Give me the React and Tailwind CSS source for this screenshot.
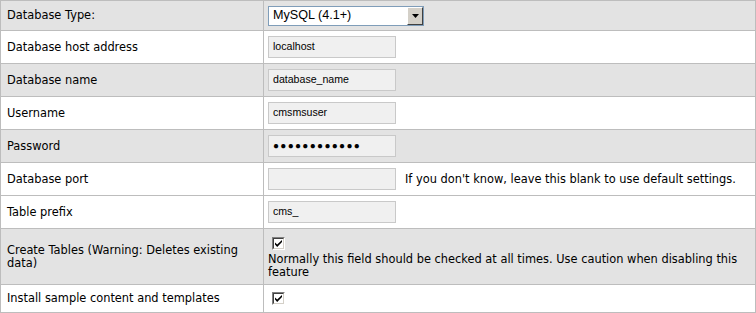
import React from "react";

const label = "font-['DejaVu_Sans',sans-serif] text-[11.4px] leading-[13px] text-black";
const inputCls =
  "w-[128px] h-[22px] border border-[#c9c9c9] bg-[#f0f0f0] pl-[4px] flex items-center font-['Liberation_Sans',Arial,sans-serif] text-[10.6px] text-black";

function Check() {
  return (
    <span className="inline-flex w-[13px] h-[13px] border border-t-[#808080] border-l-[#808080] border-b-white border-r-white">
      <span className="flex-1 border border-t-[#404040] border-l-[#404040] border-b-[#d4d0c8] border-r-[#d4d0c8] bg-white flex items-center justify-center">
        <svg width="7" height="7" viewBox="0 0 7 7" className="block">
          <path d="M0 2.5 L0 4.5 L2.2 7 L7 2 L7 0 L2.2 4.6 Z" fill="#000" />
        </svg>
      </span>
    </span>
  );
}

function Row({ gray, h, last, left, children, align = "items-center" }) {
  return (
    <div
      className={`flex ${h} ${last ? "" : "border-b border-[#bdbdbd]"} ${gray ? "bg-[#e3e3e3]" : "bg-white"}`}
    >
      <div className={`w-[263px] shrink-0 border-r border-[#bdbdbd] pl-[6px] pr-[4px] flex items-center ${label}`}>
        {left}
      </div>
      <div className={`flex-1 pl-[4px] flex ${align}`}>{children}</div>
    </div>
  );
}

function Input({ value }) {
  return <div className={inputCls}>{value}</div>;
}

export default function App() {
  return (
    <div className="w-[756px] border border-[#bdbdbd] bg-white">
      <Row gray h="h-[30px]" left="Database Type:">
        <div className="w-[156px] h-[20px] border border-[#7f9db9] bg-white flex items-center">
          <span className="flex-1 pl-[4px] font-['Liberation_Sans',Arial,sans-serif] text-[12.6px] text-black leading-none">
            MySQL (4.1+)
          </span>
          <span className="w-[16px] h-[18px] bg-[#d4d0c8] border border-t-[#fff] border-l-[#fff] border-b-[#404040] border-r-[#404040] flex items-center justify-center">
            <svg width="7" height="4" viewBox="0 0 7 4" className="block">
              <path d="M0 0 H7 L3.5 4 Z" fill="#000" />
            </svg>
          </span>
        </div>
      </Row>
      <Row h="h-[33px]" left="Database host address">
        <Input value="localhost" />
      </Row>
      <Row gray h="h-[33px]" left="Database name">
        <Input value="database_name" />
      </Row>
      <Row h="h-[33px]" left="Username">
        <Input value="cmsmsuser" />
      </Row>
      <Row gray h="h-[33px]" left="Password">
        <div className={inputCls}>
          <span className="font-['Liberation_Sans',Arial,sans-serif] text-[10px] tracking-[1.3px] leading-none">
            ●●●●●●●●●●●●
          </span>
        </div>
      </Row>
      <Row h="h-[33px]" left="Database port">
        <Input value="" />
        <span className={`ml-[9px] ${label}`}>
          If you don't know, leave this blank to use default settings.
        </span>
      </Row>
      <Row h="h-[33px]" left="Table prefix">
        <Input value="cms_" />
      </Row>
      <Row gray h="h-[56px]" left="Create Tables (Warning: Deletes existing data)">
        <div className={`flex flex-col pr-[4px] ${label}`}>
          <div className="pl-[4px] py-[3px] flex">
            <Check />
          </div>
          <div>
            Normally this field should be checked at all times. Use caution when disabling this feature
          </div>
        </div>
      </Row>
      <Row last h="h-[27px]" left="Install sample content and templates">
        <div className="pl-[4px] flex">
          <Check />
        </div>
      </Row>
    </div>
  );
}
